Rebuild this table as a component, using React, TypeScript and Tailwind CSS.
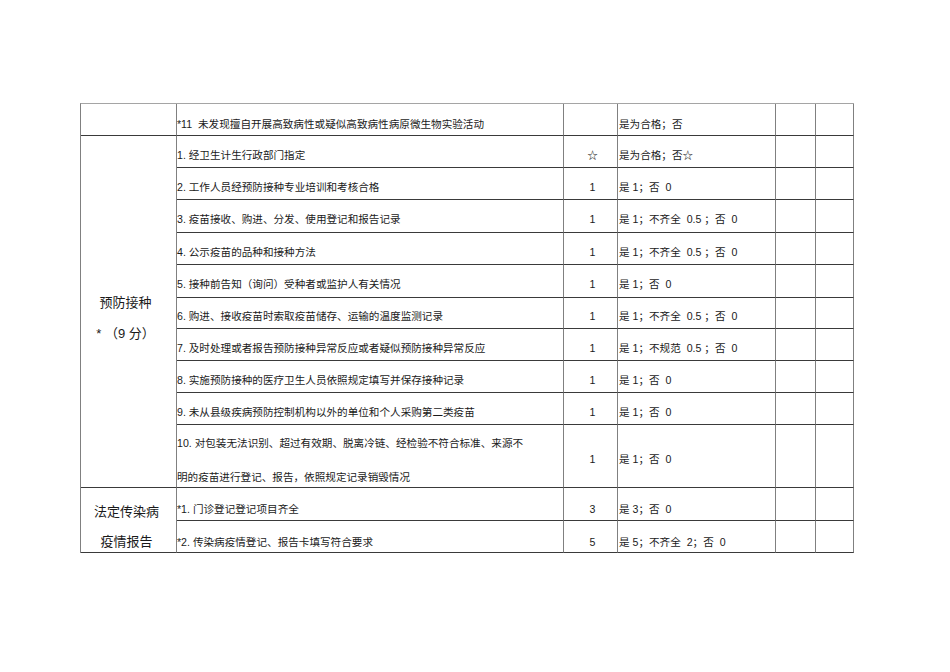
import React from "react";

const font = "font-['Liberation_Sans','Noto_Sans_CJK_SC',sans-serif]";

type Item = { text: React.ReactNode; score: string; rule: string; tall?: boolean };

const vaccine: Item[] = [
  { text: "1. 经卫生计生行政部门指定", score: "☆", rule: "是为合格；否☆" },
  { text: "2. 工作人员经预防接种专业培训和考核合格", score: "1", rule: "是 1；否  0" },
  { text: "3. 疫苗接收、购进、分发、使用登记和报告记录", score: "1", rule: "是 1；不齐全  0.5 ；否  0" },
  { text: "4. 公示疫苗的品种和接种方法", score: "1", rule: "是 1；不齐全  0.5 ；否  0" },
  { text: "5. 接种前告知（询问）受种者或监护人有关情况", score: "1", rule: "是 1；否  0" },
  { text: "6. 购进、接收疫苗时索取疫苗储存、运输的温度监测记录", score: "1", rule: "是 1；不齐全  0.5 ；否  0" },
  { text: "7. 及时处理或者报告预防接种异常反应或者疑似预防接种异常反应", score: "1", rule: "是 1；不规范  0.5 ；否  0" },
  { text: "8. 实施预防接种的医疗卫生人员依照规定填写并保存接种记录", score: "1", rule: "是 1；否  0" },
  { text: "9. 未从县级疾病预防控制机构以外的单位和个人采购第二类疫苗", score: "1", rule: "是 1；否  0" },
  {
    text: (
      <>
        10. 对包装无法识别、超过有效期、脱离冷链、经检验不符合标准、来源不
        <br />
        明的疫苗进行登记、报告，依照规定记录销毁情况
      </>
    ),
    score: "1",
    rule: "是 1；否  0",
    tall: true,
  },
];

const report: Item[] = [
  { text: "*1. 门诊登记登记项目齐全", score: "3", rule: "是 3；否  0" },
  { text: "*2. 传染病疫情登记、报告卡填写符合要求", score: "5", rule: "是 5；不齐全  2；否  0" },
];

// each cell draws its own right and bottom line
const cell = "border-r border-b border-r-[#808080] border-b-[#3a3a3a] flex items-center";

function Row({ item, low }: { item: Item; low?: boolean }) {
  const pad = low ? "pt-[12px]" : "pt-[8px]";
  return (
    <>
      <div className={`${cell} ${pad} ${item.tall ? "leading-[34px]" : ""}`}>
        <div>{item.text}</div>
      </div>
      <div className={`${cell} ${pad} justify-center pl-[4px]`}>{item.score}</div>
      <div className={`${cell} ${pad} pl-[1px] whitespace-pre`}>{item.rule}</div>
      <div className={cell} />
      <div className={cell} />
    </>
  );
}

export default function App() {
  return (
    <div className={`w-[950px] h-[672px] bg-white pt-[103px] pl-[80px] ${font}`}>
      <div className="grid grid-cols-[96px_387px_54px_158px_40px_38px] grid-rows-[32px_32px_32px_33px_32px_33px_31px_32px_32px_32px_63px_33px_32px] w-[774px] border-t border-l border-t-[#a5a5a5] border-l-[#808080] text-[10.6px] text-[#1a1a1a]">
        {/* first row, carried over from the previous page */}
        <div className={cell} />
        <div className={`${cell} pt-[10px] whitespace-pre`}>*11  未发现擅自开展高致病性或疑似高致病性病原微生物实验活动</div>
        <div className={cell} />
        <div className={`${cell} pt-[10px] pl-[1px]`}>是为合格；否</div>
        <div className={cell} />
        <div className={cell} />

        {/* 预防接种 */}
        <div className={`${cell} row-span-10 justify-center pr-[6px] pt-[12px] text-[13px] leading-[31px]`}>
          <div className="text-center">
            <div>预防接种</div>
            <div className="whitespace-pre">* （9 分）</div>
          </div>
        </div>
        {vaccine.map((it, i) => (
          <Row key={i} item={it} />
        ))}

        {/* 法定传染病疫情报告 */}
        <div className={`${cell} row-span-2 justify-center pr-[4px] pt-[14px] text-[13px] leading-[30px]`}>
          <div className="text-center">
            <div>法定传染病</div>
            <div>疫情报告</div>
          </div>
        </div>
        {report.map((it, i) => (
          <Row key={i} item={it} low />
        ))}
      </div>
    </div>
  );
}
